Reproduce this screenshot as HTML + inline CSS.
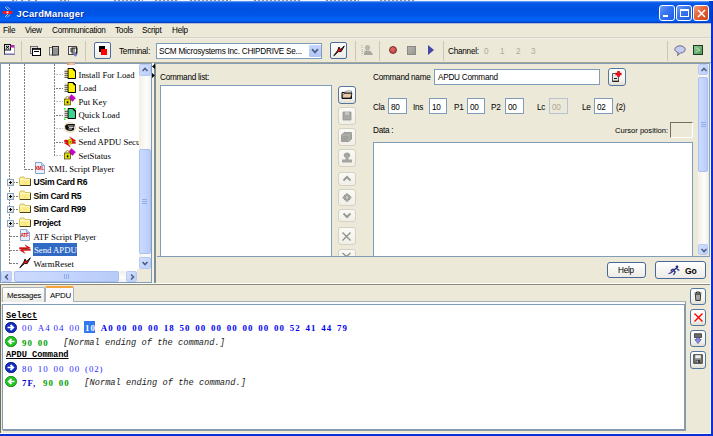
<!DOCTYPE html>
<html><head><meta charset="utf-8">
<style>
*{margin:0;padding:0;box-sizing:border-box}
html,body{width:713px;height:436px;overflow:hidden;background:#ECE9D8;font-family:"Liberation Sans",sans-serif;font-size:8.2px;letter-spacing:-0.25px;color:#000}
.a{position:absolute}
.t{position:absolute;white-space:pre;line-height:1}
.sep{position:absolute;width:1px;background:#CBC7B4}
.edit{position:absolute;background:#fff;border:1px solid #7F9DB9}
.tb{position:absolute;border:1px solid #C9C7BA;border-radius:2px;background:#F4F3EE}
.tbh{position:absolute;border:1px solid #4C6C9C;border-radius:2px;background:linear-gradient(#FFFFFF,#ECEBE6)}
.dv{position:absolute;width:1px;background-image:linear-gradient(#808080 66%,transparent 66%);background-size:1px 3px}
.dh{position:absolute;height:1px;background-image:linear-gradient(90deg,#808080 66%,transparent 66%);background-size:3px 1px}
.sbtn{border:1px solid #B6C9F5;border-radius:2px;background:linear-gradient(135deg,#D3E0FD,#BCCFFA)}
.sthumb{border:1px solid #A9C0F5;border-radius:2px;background:linear-gradient(90deg,#CCDAFC,#C3D4FC 50%,#B8CBF8)}
.serif{font-family:"Liberation Serif",serif;font-size:8.7px;letter-spacing:0}
.mono{font-family:"Liberation Mono",monospace;font-size:8.7px;font-weight:bold;letter-spacing:0}
</style></head><body>

<!-- title bar -->
<div class="a" style="left:0;top:0;width:713px;height:1px;background:#F4F6FA"></div>
<div class="a" style="left:12px;top:0;width:5px;height:1px;background:repeating-linear-gradient(90deg,#8A8FA8 0 2px,#E8ECF4 2px 4px)"></div><div class="a" style="left:21px;top:0;width:4px;height:1px;background:repeating-linear-gradient(90deg,#8A8FA8 0 2px,#E8ECF4 2px 4px)"></div><div class="a" style="left:28px;top:0;width:4px;height:1px;background:repeating-linear-gradient(90deg,#8A8FA8 0 2px,#E8ECF4 2px 4px)"></div><div class="a" style="left:35px;top:0;width:3px;height:1px;background:repeating-linear-gradient(90deg,#8A8FA8 0 2px,#E8ECF4 2px 4px)"></div><div class="a" style="left:60px;top:0;width:9px;height:1px;background:repeating-linear-gradient(90deg,#8A8FA8 0 2px,#E8ECF4 2px 4px)"></div><div class="a" style="left:114px;top:0;width:29px;height:1px;background:repeating-linear-gradient(90deg,#8A8FA8 0 2px,#E8ECF4 2px 4px)"></div><div class="a" style="left:155px;top:0;width:24px;height:1px;background:repeating-linear-gradient(90deg,#8A8FA8 0 2px,#E8ECF4 2px 4px)"></div><div class="a" style="left:190px;top:0;width:41px;height:1px;background:repeating-linear-gradient(90deg,#8A8FA8 0 2px,#E8ECF4 2px 4px)"></div><div class="a" style="left:254px;top:0;width:47px;height:1px;background:repeating-linear-gradient(90deg,#8A8FA8 0 2px,#E8ECF4 2px 4px)"></div><div class="a" style="left:326px;top:0;width:33px;height:1px;background:repeating-linear-gradient(90deg,#8A8FA8 0 2px,#E8ECF4 2px 4px)"></div><div class="a" style="left:380px;top:0;width:34px;height:1px;background:repeating-linear-gradient(90deg,#8A8FA8 0 2px,#E8ECF4 2px 4px)"></div>
<div class="a" style="left:0;top:1px;width:713px;height:23px;background:linear-gradient(#7EB0F8 0px,#2A78F0 1px,#0858E8 2px,#0052E2 8px,#0054E6 13px,#0062F6 18px,#0060F4 20px,#0046D0 21px,#003CC0 22px,#9AAAD0 22px,#C8CCD8 23px)"></div>
<div class="a" style="left:709px;top:1px;width:4px;height:22px;background:linear-gradient(90deg,#0050E0,#0030C8)"></div>
<div class="t" style="left:16.5px;top:9px;font-weight:bold;font-size:9.4px;letter-spacing:0.2px;color:#fff;text-shadow:1px 1px 0 #0A2A9C">JCardManager</div>

<!-- menu -->
<div class="t" style="left:3px;top:27px">File</div>
<div class="t" style="left:25px;top:27px">View</div>
<div class="t" style="left:52px;top:27px">Communication</div>
<div class="t" style="left:115px;top:27px">Tools</div>
<div class="t" style="left:142px;top:27px">Script</div>
<div class="t" style="left:172px;top:27px">Help</div>
<div class="a" style="left:0;top:37px;width:711px;height:1px;background:#D6D2C2"></div>
<div class="a" style="left:0;top:38px;width:711px;height:1px;background:#F2F0E8"></div>

<!-- toolbar -->

<div class="sep" style="left:21px;top:41px;height:20px"></div>
<div class="sep" style="left:85px;top:41px;height:20px"></div>
<div class="sep" style="left:355px;top:41px;height:20px"></div>
<div class="sep" style="left:379px;top:41px;height:20px"></div>
<div class="sep" style="left:443px;top:41px;height:20px"></div>
<div class="sep" style="left:667px;top:41px;height:20px"></div>
<div class="tbh" style="left:94px;top:42px;width:17px;height:17px"></div>
<div class="a" style="left:99px;top:46px;width:6px;height:6px;background:#000"></div>
<div class="a" style="left:101px;top:49px;width:6px;height:6px;background:#F00"></div>
<div class="t" style="left:119px;top:48px">Terminal:</div>
<div class="edit" style="left:156px;top:43px;width:166px;height:16px"></div>
<div class="t" style="left:159px;top:48px">SCM Microsystems Inc. CHIPDRIVE Se...</div>
<div class="a" style="left:309px;top:45px;width:12px;height:12px;background:linear-gradient(#C6D6FC,#B0C6F8);border-radius:1px"></div>
<div class="tbh" style="left:330px;top:42px;width:17px;height:17px"></div>
<div class="t" style="left:448px;top:48px">Channel:</div>
<div class="t" style="left:484px;top:48px;color:#ACA899">0</div>
<div class="t" style="left:500px;top:48px;color:#ACA899">1</div>
<div class="t" style="left:516px;top:48px;color:#ACA899">2</div>
<div class="t" style="left:531px;top:48px;color:#ACA899">3</div>
<div class="a" style="left:389px;top:46px;width:8px;height:8px;border-radius:50%;background:radial-gradient(circle at 40% 35%,#E06A64,#B83A36);border:1px solid #7A2A28"></div>
<div class="a" style="left:407px;top:46px;width:9px;height:9px;background:linear-gradient(135deg,#B4B4B0,#98988F);border:1px solid #8A8A84"></div>
<div class="a" style="left:428px;top:45px;width:0;height:0;border-top:5px solid transparent;border-bottom:5px solid transparent;border-left:6px solid #4848A8"></div>

<!-- tree panel -->
<div class="a" style="left:0;top:63px;width:152px;height:220px;border:1px solid #7F9DB9;background:#fff"></div>
<div class="dv" style="left:9px;top:64px;height:200px"></div>
<div class="dv" style="left:24px;top:64px;height:106px"></div>
<div class="dv" style="left:54px;top:64px;height:92px"></div>
<div class="a" style="left:56px;top:74px;width:7px;height:1px;background-image:linear-gradient(90deg,#C4C4C4 66%,transparent 66%);background-size:3px 1px"></div>
<div class="t serif" style="left:78.5px;top:70.7px">Install For Load</div>
<div class="a" style="left:56px;top:88px;width:7px;height:1px;background-image:linear-gradient(90deg,#7C7C7C 66%,transparent 66%);background-size:3px 1px"></div>
<div class="t serif" style="left:78.5px;top:84.2px">Load</div>
<div class="a" style="left:56px;top:101px;width:7px;height:1px;background-image:linear-gradient(90deg,#C4C4C4 66%,transparent 66%);background-size:3px 1px"></div>
<div class="t serif" style="left:78.5px;top:97.7px">Put Key</div>
<div class="a" style="left:56px;top:115px;width:7px;height:1px;background-image:linear-gradient(90deg,#7C7C7C 66%,transparent 66%);background-size:3px 1px"></div>
<div class="t serif" style="left:78.5px;top:111.2px">Quick Load</div>
<div class="a" style="left:56px;top:128px;width:7px;height:1px;background-image:linear-gradient(90deg,#C4C4C4 66%,transparent 66%);background-size:3px 1px"></div>
<div class="t serif" style="left:78.5px;top:124.7px">Select</div>
<div class="a" style="left:56px;top:142px;width:7px;height:1px;background-image:linear-gradient(90deg,#7C7C7C 66%,transparent 66%);background-size:3px 1px"></div>
<div class="t serif" style="left:78.5px;top:138.2px">Send APDU Secure</div>
<div class="a" style="left:56px;top:155px;width:7px;height:1px;background-image:linear-gradient(90deg,#C4C4C4 66%,transparent 66%);background-size:3px 1px"></div>
<div class="t serif" style="left:78.5px;top:151.7px">SetStatus</div>
<div class="a" style="left:25px;top:169px;width:8px;height:1px;background-image:linear-gradient(90deg,#7C7C7C 66%,transparent 66%);background-size:3px 1px"></div>
<div class="t serif" style="left:48px;top:165.2px">XML Script Player</div>
<div class="a" style="left:10px;top:182px;width:9px;height:1px;background-image:linear-gradient(90deg,#7C7C7C 66%,transparent 66%);background-size:3px 1px"></div>
<div class="t" style="left:33.5px;top:178.3px;font-weight:bold;font-size:8.6px;letter-spacing:-0.3px">USim Card R6</div>
<div class="a" style="left:10px;top:196px;width:9px;height:1px;background-image:linear-gradient(90deg,#7C7C7C 66%,transparent 66%);background-size:3px 1px"></div>
<div class="t" style="left:33.5px;top:191.8px;font-weight:bold;font-size:8.6px;letter-spacing:-0.3px">Sim Card R5</div>
<div class="a" style="left:10px;top:209px;width:9px;height:1px;background-image:linear-gradient(90deg,#7C7C7C 66%,transparent 66%);background-size:3px 1px"></div>
<div class="t" style="left:33.5px;top:205.3px;font-weight:bold;font-size:8.6px;letter-spacing:-0.3px">Sim Card R99</div>
<div class="a" style="left:10px;top:223px;width:9px;height:1px;background-image:linear-gradient(90deg,#7C7C7C 66%,transparent 66%);background-size:3px 1px"></div>
<div class="t" style="left:33.5px;top:218.8px;font-weight:bold;font-size:8.6px;letter-spacing:-0.3px">Project</div>
<div class="a" style="left:10px;top:236px;width:9px;height:1px;background-image:linear-gradient(90deg,#7C7C7C 66%,transparent 66%);background-size:3px 1px"></div>
<div class="t serif" style="left:33.5px;top:232.7px">ATF Script Player</div>
<div class="a" style="left:10px;top:250px;width:9px;height:1px;background-image:linear-gradient(90deg,#7C7C7C 66%,transparent 66%);background-size:3px 1px"></div>
<div class="a" style="left:33px;top:243px;width:44px;height:13px;background:#316AC5"></div>
<div class="t serif" style="left:34.0px;top:246.2px;color:#fff">Send APDU</div>
<div class="a" style="left:10px;top:263px;width:9px;height:1px;background-image:linear-gradient(90deg,#7C7C7C 66%,transparent 66%);background-size:3px 1px"></div>
<div class="t serif" style="left:33.5px;top:259.7px">WarmReset</div>

<div class="a" style="left:67px;top:63px;width:8px;height:2px;background:linear-gradient(90deg,#F08080,#F4D090,#E0A0E0)"></div>
<svg class="a" style="left:64px;top:68px" width="12" height="11" viewBox="0 0 12 11"><path d="M4 0.5H9.5L11.5 2.5V10.5H4Z" fill="#FFF200" stroke="#000" stroke-width="1"/><path d="M9 1L11 3" stroke="#000" stroke-width="1.2"/><path d="M0.5 2H4" stroke="#E9D9B0" stroke-width="1"/><path d="M0.5 3.3H4M0.5 5.3H4M0.5 7.3H4M0.5 9.3H4" stroke="#222" stroke-width="0.9"/><path d="M0.8 4.3H3.5M0.8 6.3H3.5M0.8 8.3H3.5" stroke="#D8C8A0" stroke-width="0.8"/></svg>
<svg class="a" style="left:64px;top:82px" width="12" height="11" viewBox="0 0 12 11"><path d="M4 0.5H9.5L11.5 2.5V10.5H4Z" fill="#FFF200" stroke="#000" stroke-width="1"/><path d="M9 1L11 3" stroke="#000" stroke-width="1.2"/><path d="M0.5 2H4" stroke="#E9D9B0" stroke-width="1"/><path d="M0.5 3.3H4M0.5 5.3H4M0.5 7.3H4M0.5 9.3H4" stroke="#222" stroke-width="0.9"/><path d="M0.8 4.3H3.5M0.8 6.3H3.5M0.8 8.3H3.5" stroke="#D8C8A0" stroke-width="0.8"/></svg>
<svg class="a" style="left:64px;top:94px" width="12" height="12" viewBox="0 0 12 12"><path d="M7.5 0.5L11.5 4L8.5 7.5L4.5 4Z" fill="#CC00CC" stroke="#8A008A" stroke-width="0.4"/><rect x="0.5" y="5" width="6" height="6" fill="#E8E000" stroke="#202000" stroke-width="0.6"/><path d="M1.8 5V3.5Q3.5 1.5 5.2 3.5V5" fill="none" stroke="#9A9400" stroke-width="1"/><rect x="2.8" y="7.3" width="1.6" height="2" fill="#000"/></svg>
<svg class="a" style="left:64px;top:108px" width="12" height="12" viewBox="0 0 12 12"><path d="M4 0.5H9.5L11.5 2.5V10.5H4Z" fill="#3FD18F" stroke="#000" stroke-width="1"/><path d="M9 1L11 3" stroke="#000" stroke-width="1.2"/><path d="M0.5 2H4" stroke="#E9D9B0" stroke-width="1"/><path d="M0.5 3.3H4M0.5 5.3H4M0.5 7.3H4M0.5 9.3H4" stroke="#222" stroke-width="0.9"/><path d="M0.8 4.3H3.5M0.8 6.3H3.5M0.8 8.3H3.5" stroke="#D8C8A0" stroke-width="0.8"/><rect x="0" y="0" width="1.5" height="1.5" fill="#0F0"/><rect x="10.5" y="0" width="1.5" height="1.5" fill="#0F0"/><rect x="0" y="10.5" width="1.5" height="1.5" fill="#0F0"/></svg>
<svg class="a" style="left:64px;top:122px" width="12" height="11" viewBox="0 0 12 11"><ellipse cx="6" cy="5.5" rx="5.8" ry="5" fill="#F2E6CC" stroke="#D8C8A0" stroke-width="0.5"/><path d="M1 4Q2 1.5 6 2H11L10 5.5Q11 8.5 7 9Q3 9 1.5 7Z" fill="#111"/><path d="M4 4H9.5M5 5.5H9.5M4.5 7H8" stroke="#fff" stroke-width="0.8"/></svg>
<svg class="a" style="left:64px;top:136px" width="12" height="12" viewBox="0 0 12 12"><path d="M0.5 4H8L5.5 0.8L11.8 4.6L8 6H0.5Z" fill="#F00" stroke="#A00" stroke-width="0.3"/><path d="M11.5 7.5H4L6.5 11L0.2 7L4 5.8H11.5Z" fill="#F00" stroke="#A00" stroke-width="0.3"/><path d="M1 5.9H11" stroke="#555" stroke-width="0.5"/><rect x="4.3" y="3.5" width="3.6" height="4.6" rx="0.8" fill="#F0E800" stroke="#8A8400" stroke-width="0.6"/><rect x="5.7" y="5.2" width="0.9" height="1.4" fill="#222"/></svg>
<svg class="a" style="left:64px;top:148px" width="12" height="12" viewBox="0 0 12 12"><path d="M7.5 0.5L11.5 4L8.5 7.5L4.5 4Z" fill="#CC00CC" stroke="#8A008A" stroke-width="0.4"/><rect x="0.5" y="5" width="6" height="6" fill="#E8E000" stroke="#202000" stroke-width="0.6"/><path d="M1.8 5V3.5Q3.5 1.5 5.2 3.5V5" fill="none" stroke="#9A9400" stroke-width="1"/><rect x="2.8" y="7.3" width="1.6" height="2" fill="#000"/></svg>
<svg class="a" style="left:34px;top:162px" width="11" height="12" viewBox="0 0 11 12"><path d="M1.5 0.5H7.5L10.5 3.5V11.5H1.5Z" fill="#E8F0FC" stroke="#7C98C8" stroke-width="0.9"/><path d="M7.5 0.5V3.5H10.5" fill="#C0D4F0" stroke="#7C98C8" stroke-width="0.7"/><text x="5.5" y="7.8" font-family="Liberation Sans" font-size="4.6" font-weight="bold" fill="#E01010" text-anchor="middle" letter-spacing="-0.3">XML</text></svg>
<div class="a" style="left:7px;top:179px;width:7px;height:7px;border:1px solid #8AA4C6;background:linear-gradient(135deg,#fff,#D6D0C0)"></div>
<div class="a" style="left:9px;top:182px;width:3px;height:1px;background:#000"></div>
<div class="a" style="left:10px;top:181px;width:1px;height:3px;background:#000"></div>
<svg class="a" style="left:19px;top:176px" width="12" height="10" viewBox="0 0 12 10"><path d="M0.5 2.5V9.5H11.5V2.5H6L5 1H1.5Z" fill="#FCEE8C" stroke="#C8B050" stroke-width="0.8"/><path d="M1.2 3.4H10.8" stroke="#FFFCE0" stroke-width="0.8"/><path d="M4 5L8 8.5M8 5L4 8.5" stroke="#F4D880" stroke-width="0.6"/><path d="M1 9.6H11.6V3" stroke="#2A2410" stroke-width="0.9" fill="none"/></svg>
<div class="a" style="left:7px;top:193px;width:7px;height:7px;border:1px solid #8AA4C6;background:linear-gradient(135deg,#fff,#D6D0C0)"></div>
<div class="a" style="left:9px;top:196px;width:3px;height:1px;background:#000"></div>
<div class="a" style="left:10px;top:195px;width:1px;height:3px;background:#000"></div>
<svg class="a" style="left:19px;top:190px" width="12" height="10" viewBox="0 0 12 10"><path d="M0.5 2.5V9.5H11.5V2.5H6L5 1H1.5Z" fill="#FCEE8C" stroke="#C8B050" stroke-width="0.8"/><path d="M1.2 3.4H10.8" stroke="#FFFCE0" stroke-width="0.8"/><path d="M4 5L8 8.5M8 5L4 8.5" stroke="#F4D880" stroke-width="0.6"/><path d="M1 9.6H11.6V3" stroke="#2A2410" stroke-width="0.9" fill="none"/></svg>
<div class="a" style="left:7px;top:206px;width:7px;height:7px;border:1px solid #8AA4C6;background:linear-gradient(135deg,#fff,#D6D0C0)"></div>
<div class="a" style="left:9px;top:209px;width:3px;height:1px;background:#000"></div>
<div class="a" style="left:10px;top:208px;width:1px;height:3px;background:#000"></div>
<svg class="a" style="left:19px;top:203px" width="12" height="10" viewBox="0 0 12 10"><path d="M0.5 2.5V9.5H11.5V2.5H6L5 1H1.5Z" fill="#FCEE8C" stroke="#C8B050" stroke-width="0.8"/><path d="M1.2 3.4H10.8" stroke="#FFFCE0" stroke-width="0.8"/><path d="M4 5L8 8.5M8 5L4 8.5" stroke="#F4D880" stroke-width="0.6"/><path d="M1 9.6H11.6V3" stroke="#2A2410" stroke-width="0.9" fill="none"/></svg>
<div class="a" style="left:7px;top:220px;width:7px;height:7px;border:1px solid #8AA4C6;background:linear-gradient(135deg,#fff,#D6D0C0)"></div>
<div class="a" style="left:9px;top:223px;width:3px;height:1px;background:#000"></div>
<div class="a" style="left:10px;top:222px;width:1px;height:3px;background:#000"></div>
<svg class="a" style="left:19px;top:217px" width="12" height="10" viewBox="0 0 12 10"><path d="M0.5 2.5V9.5H11.5V2.5H6L5 1H1.5Z" fill="#FCEE8C" stroke="#C8B050" stroke-width="0.8"/><path d="M1.2 3.4H10.8" stroke="#FFFCE0" stroke-width="0.8"/><path d="M4 5L8 8.5M8 5L4 8.5" stroke="#F4D880" stroke-width="0.6"/><path d="M1 9.6H11.6V3" stroke="#2A2410" stroke-width="0.9" fill="none"/></svg>
<svg class="a" style="left:19px;top:229px" width="11" height="12" viewBox="0 0 11 12"><path d="M1.5 0.5H7.5L10.5 3.5V11.5H1.5Z" fill="#E8F0FC" stroke="#7C98C8" stroke-width="0.9"/><path d="M7.5 0.5V3.5H10.5" fill="#C0D4F0" stroke="#7C98C8" stroke-width="0.7"/><text x="5.6" y="7.6" font-family="Liberation Sans" font-size="4.8" font-weight="bold" fill="#E01010" text-anchor="middle" letter-spacing="-0.2">ATF</text></svg>
<svg class="a" style="left:19px;top:244px" width="12" height="11" viewBox="0 0 12 11"><path d="M0.5 3.5H8L6 0.8L11.5 4L8 5H0.5Z" fill="#F00" stroke="#900" stroke-width="0.3"/><path d="M11.5 6.5H4L6 9.5L0.5 6L4 5.2H11.5Z" fill="#F00" stroke="#900" stroke-width="0.3"/><path d="M2 5.2H11" stroke="#444" stroke-width="0.6"/></svg>
<svg class="a" style="left:19px;top:257px" width="12" height="12" viewBox="0 0 12 12"><path d="M0.8 10.8L4.8 5.2L6 2L7.6 4.6L11.3 0.8L8.2 6.6L5.4 6.6Z" fill="#F01010" stroke="#000" stroke-width="0.9" stroke-linejoin="round"/></svg>

<div class="a" style="left:139px;top:64px;width:12px;height:205px;background:linear-gradient(90deg,#F1EFE6,#FDFDFA 60%,#F3F1EA)"></div>
<div class="a sbtn" style="left:139px;top:64px;width:12px;height:12px"></div>
<div class="a" style="left:142px;top:67px;width:6px;height:5px"><svg width="6" height="5" style="display:block;overflow:visible"><path d="M0.5 4L3 1.5L5.5 4" stroke="#4D6185" stroke-width="1.6" fill="none"/></svg></div>
<div class="a sthumb" style="left:139px;top:149px;width:12px;height:105px"></div>
<div class="a" style="left:142px;top:199px;width:5px;height:1px;background:#E6EEFC;border-bottom:1px solid #8FAEEB"></div>
<div class="a" style="left:142px;top:201px;width:5px;height:1px;background:#E6EEFC;border-bottom:1px solid #8FAEEB"></div>
<div class="a" style="left:142px;top:203px;width:5px;height:1px;background:#E6EEFC;border-bottom:1px solid #8FAEEB"></div>
<div class="a sbtn" style="left:139px;top:257px;width:12px;height:12px"></div>
<div class="a" style="left:142px;top:261px;width:6px;height:5px"><svg width="6" height="5" style="display:block;overflow:visible"><path d="M0.5 1L3 3.5L5.5 1" stroke="#4D6185" stroke-width="1.6" fill="none"/></svg></div>
<div class="a" style="left:1px;top:271px;width:136px;height:11px;background:linear-gradient(#F1EFE6,#FDFDFA 60%,#F3F1EA)"></div>
<div class="a sbtn" style="left:1px;top:271px;width:11px;height:11px"></div>
<div class="a" style="left:4px;top:274px;width:5px;height:6px"><svg width="5" height="6" style="display:block;overflow:visible"><path d="M4 0.5L1.5 3L4 5.5" stroke="#4D6185" stroke-width="1.6" fill="none"/></svg></div>
<div class="a sthumb" style="left:14px;top:271px;width:105px;height:11px"></div>
<div class="a" style="left:64px;top:274px;width:1px;height:5px;background:#E6EEFC;border-right:1px solid #8FAEEB"></div>
<div class="a" style="left:66px;top:274px;width:1px;height:5px;background:#E6EEFC;border-right:1px solid #8FAEEB"></div>
<div class="a" style="left:68px;top:274px;width:1px;height:5px;background:#E6EEFC;border-right:1px solid #8FAEEB"></div>
<div class="a sbtn" style="left:126px;top:271px;width:11px;height:11px"></div>
<div class="a" style="left:130px;top:274px;width:5px;height:6px"><svg width="5" height="6" style="display:block;overflow:visible"><path d="M1 0.5L3.5 3L1 5.5" stroke="#4D6185" stroke-width="1.6" fill="none"/></svg></div>
<div class="a" style="left:137px;top:269px;width:14px;height:13px;background:#ECE9D8"></div>
<div class="a" style="left:698px;top:64px;width:10px;height:191px;background:linear-gradient(90deg,#F1EFE6,#FDFDFA 60%,#F3F1EA)"></div>
<div class="a sbtn" style="left:698px;top:64px;width:10px;height:11px"></div>
<div class="a" style="left:701px;top:67px;width:6px;height:5px"><svg width="6" height="5" style="display:block;overflow:visible"><path d="M0.5 4L3 1.5L5.5 4" stroke="#4D6185" stroke-width="1.6" fill="none"/></svg></div>
<div class="a sthumb" style="left:698px;top:77px;width:10px;height:95px"></div>
<div class="a" style="left:701px;top:122px;width:5px;height:1px;background:#E6EEFC;border-bottom:1px solid #8FAEEB"></div>
<div class="a" style="left:701px;top:124px;width:5px;height:1px;background:#E6EEFC;border-bottom:1px solid #8FAEEB"></div>
<div class="a" style="left:701px;top:126px;width:5px;height:1px;background:#E6EEFC;border-bottom:1px solid #8FAEEB"></div>
<div class="a sbtn" style="left:698px;top:244px;width:10px;height:11px"></div>
<div class="a" style="left:701px;top:248px;width:6px;height:5px"><svg width="6" height="5" style="display:block;overflow:visible"><path d="M0.5 1L3 3.5L5.5 1" stroke="#4D6185" stroke-width="1.6" fill="none"/></svg></div>

<div class="a" style="left:709px;top:63px;width:1px;height:194px;background:#8FA3BC"></div>

<!-- right panel -->
<div class="a" style="left:155px;top:63px;width:555px;height:220px;border-top:1px solid #7F9DB9;border-left:1px solid #7090A8"></div>
<div class="a" style="left:154px;top:62px;width:1px;height:222px;background:#8A8878"></div>
<div class="a" style="left:152px;top:62px;width:2px;height:221px;background:#F6F4EA"></div>
<div class="a" style="left:0;top:62px;width:711px;height:1px;background:#A8A690"></div>
<div class="a" style="left:0;top:283px;width:711px;height:1px;background:#FFFFFF"></div>
<div class="a" style="left:0;top:284px;width:711px;height:1px;background:#8C8A7C"></div>
<div class="t" style="left:160px;top:74px">Command list:</div>
<div class="edit" style="left:160px;top:85px;width:172px;height:172px"></div>
<div class="t" style="left:373px;top:74px">Command name</div>
<div class="edit" style="left:434px;top:69px;width:166px;height:16px"></div>
<div class="t" style="left:438px;top:74px">APDU Command</div>
<div class="t" style="left:373px;top:104px">Cla</div>
<div class="edit" style="left:388px;top:98px;width:19px;height:16px"></div>
<div class="t" style="left:391px;top:104px">80</div>
<div class="t" style="left:413px;top:104px">Ins</div>
<div class="edit" style="left:429px;top:98px;width:18px;height:16px"></div>
<div class="t" style="left:432px;top:104px">10</div>
<div class="t" style="left:454px;top:104px">P1</div>
<div class="edit" style="left:467px;top:98px;width:18px;height:16px"></div>
<div class="t" style="left:470px;top:104px">00</div>
<div class="t" style="left:491px;top:104px">P2</div>
<div class="edit" style="left:505px;top:98px;width:19px;height:16px"></div>
<div class="t" style="left:508px;top:104px">00</div>
<div class="t" style="left:537px;top:104px">Lc</div>
<div class="edit" style="left:549px;top:98px;width:19px;height:16px;background:#ECE9D8;border-color:#B5C3D3"></div>
<div class="t" style="left:552px;top:104px;color:#ACA899">00</div>
<div class="t" style="left:582px;top:104px">Le</div>
<div class="edit" style="left:594px;top:98px;width:19px;height:16px"></div>
<div class="t" style="left:597px;top:104px">02</div>
<div class="t" style="left:616px;top:104px">(2)</div>
<div class="t" style="left:373px;top:127px">Data :</div>
<div class="t" style="left:615px;top:127px;font-size:7.6px;letter-spacing:0">Cursor position:</div>
<div class="a" style="left:670px;top:122px;width:23px;height:16px;border-top:1px solid #716F64;border-left:1px solid #716F64;border-bottom:1px solid #fff;border-right:1px solid #fff"></div>
<div class="edit" style="left:373px;top:142px;width:320px;height:115px"></div>
<div class="a" style="left:157px;top:256px;width:552px;height:1px;background:#7F9DB9"></div>

<!-- help / go -->
<div class="a" style="left:607px;top:262px;width:39px;height:16px;border:1px solid #46699A;border-radius:3px;background:linear-gradient(#FFFFFF,#ECEBE6)"></div>
<div class="t" style="left:618px;top:267px">Help</div>
<div class="a" style="left:655px;top:261px;width:51px;height:18px;border:1px solid #46699A;border-radius:3px;background:linear-gradient(#FFFFFF,#ECEBE6)"></div>
<div class="t" style="left:685px;top:267px;font-weight:bold;font-size:8.6px">Go</div>

<!-- tabs & log -->
<div class="a" style="left:0;top:285px;width:1px;height:148px;background:#716F64"></div>
<div class="a" style="left:2px;top:287px;width:43px;height:15px;border:1px solid #A9B1B6;border-bottom:none;border-radius:2px 2px 0 0;background:linear-gradient(#FFFFFF,#ECEBE5)"></div>
<div class="t" style="left:7px;top:292px;font-size:7.9px">Messages</div>
<div class="a" style="left:45px;top:286px;width:29px;height:17px;border:1px solid #A9B1B6;border-bottom:none;border-top:2px solid #F5A43C;background:#FCFCFE;border-radius:2px 2px 0 0"></div>
<div class="t" style="left:50px;top:292px;font-size:7.9px">APDU</div>
<div class="a" style="left:1px;top:302px;width:685px;height:2px;background:#FCFCFE"></div>
<div class="a" style="left:2px;top:304px;width:683px;height:126px;background:#fff;border:1px solid #7F9DB9"></div>
<div class="a" style="left:74px;top:301px;width:612px;height:1px;background:#A8B0B8"></div>
<div class="a" style="left:3px;top:430px;width:683px;height:1px;background:#9098A0"></div>
<div class="a" style="left:685px;top:302px;width:1px;height:129px;background:#9098A0"></div>
<div class="a" style="left:0;top:433px;width:711px;height:1px;background:#F8F8F4"></div>
<div class="a" style="left:710px;top:63px;width:1px;height:371px;background:#F8F8F4"></div>
<div class="t mono" style="left:6px;top:311.5px;text-decoration:underline">Select</div>
<svg class="a" style="left:5px;top:322px" width="12" height="11" viewBox="0 0 12 11"><ellipse cx="6" cy="5.5" rx="5.6" ry="5.2" fill="#1030C8" stroke="#000A70" stroke-width="0.8"/><path d="M2.5 5.5H7.5M5.5 3L8.3 5.5L5.5 8" stroke="#fff" stroke-width="1.7" fill="none"/></svg>
<div class="t" style="left:22.099999999999998px;top:324px;font-family:'Liberation Serif',serif;font-weight:bold;font-size:8.9px;letter-spacing:0.9px;color:#2A2AFF;font-weight:normal">00</div>
<div class="t" style="left:37.85px;top:324px;font-family:'Liberation Serif',serif;font-weight:bold;font-size:8.9px;letter-spacing:0.9px;color:#2A2AFF;font-weight:normal">A4</div>
<div class="t" style="left:53.6px;top:324px;font-family:'Liberation Serif',serif;font-weight:bold;font-size:8.9px;letter-spacing:0.9px;color:#2A2AFF;font-weight:normal">04</div>
<div class="t" style="left:69.35000000000001px;top:324px;font-family:'Liberation Serif',serif;font-weight:bold;font-size:8.9px;letter-spacing:0.9px;color:#2A2AFF;font-weight:normal">00</div>
<div class="a" style="left:83.9px;top:321px;width:11px;height:12px;background:#3478F0"></div>
<div class="t" style="left:85.10000000000001px;top:324px;font-family:'Liberation Serif',serif;font-weight:bold;font-size:8.9px;letter-spacing:0.9px;color:#fff">10</div>
<div class="t" style="left:100.85000000000001px;top:324px;font-family:'Liberation Serif',serif;font-weight:bold;font-size:8.9px;letter-spacing:0.9px;color:#0000F0">A0</div>
<div class="t" style="left:116.60000000000001px;top:324px;font-family:'Liberation Serif',serif;font-weight:bold;font-size:8.9px;letter-spacing:0.9px;color:#0000F0">00</div>
<div class="t" style="left:132.35px;top:324px;font-family:'Liberation Serif',serif;font-weight:bold;font-size:8.9px;letter-spacing:0.9px;color:#0000F0">00</div>
<div class="t" style="left:148.1px;top:324px;font-family:'Liberation Serif',serif;font-weight:bold;font-size:8.9px;letter-spacing:0.9px;color:#0000F0">00</div>
<div class="t" style="left:163.85px;top:324px;font-family:'Liberation Serif',serif;font-weight:bold;font-size:8.9px;letter-spacing:0.9px;color:#0000F0">18</div>
<div class="t" style="left:179.6px;top:324px;font-family:'Liberation Serif',serif;font-weight:bold;font-size:8.9px;letter-spacing:0.9px;color:#0000F0">50</div>
<div class="t" style="left:195.35px;top:324px;font-family:'Liberation Serif',serif;font-weight:bold;font-size:8.9px;letter-spacing:0.9px;color:#0000F0">00</div>
<div class="t" style="left:211.1px;top:324px;font-family:'Liberation Serif',serif;font-weight:bold;font-size:8.9px;letter-spacing:0.9px;color:#0000F0">00</div>
<div class="t" style="left:226.85px;top:324px;font-family:'Liberation Serif',serif;font-weight:bold;font-size:8.9px;letter-spacing:0.9px;color:#0000F0">00</div>
<div class="t" style="left:242.6px;top:324px;font-family:'Liberation Serif',serif;font-weight:bold;font-size:8.9px;letter-spacing:0.9px;color:#0000F0">00</div>
<div class="t" style="left:258.34999999999997px;top:324px;font-family:'Liberation Serif',serif;font-weight:bold;font-size:8.9px;letter-spacing:0.9px;color:#0000F0">00</div>
<div class="t" style="left:274.09999999999997px;top:324px;font-family:'Liberation Serif',serif;font-weight:bold;font-size:8.9px;letter-spacing:0.9px;color:#0000F0">00</div>
<div class="t" style="left:289.84999999999997px;top:324px;font-family:'Liberation Serif',serif;font-weight:bold;font-size:8.9px;letter-spacing:0.9px;color:#0000F0">52</div>
<div class="t" style="left:305.59999999999997px;top:324px;font-family:'Liberation Serif',serif;font-weight:bold;font-size:8.9px;letter-spacing:0.9px;color:#0000F0">41</div>
<div class="t" style="left:321.34999999999997px;top:324px;font-family:'Liberation Serif',serif;font-weight:bold;font-size:8.9px;letter-spacing:0.9px;color:#0000F0">44</div>
<div class="t" style="left:337.09999999999997px;top:324px;font-family:'Liberation Serif',serif;font-weight:bold;font-size:8.9px;letter-spacing:0.9px;color:#0000F0">79</div>
<svg class="a" style="left:5px;top:336px" width="12" height="11" viewBox="0 0 12 11"><ellipse cx="6" cy="5.5" rx="5.6" ry="5.2" fill="#22C422" stroke="#108010" stroke-width="0.8"/><path d="M9.5 5.5H4.5M6.5 3L3.7 5.5L6.5 8" stroke="#fff" stroke-width="1.7" fill="none"/></svg>
<div class="t" style="left:22.099999999999998px;top:338.5px;font-family:'Liberation Serif',serif;font-weight:bold;font-size:8.9px;letter-spacing:0.9px;color:#00A000">90</div>
<div class="t" style="left:37.85px;top:338.5px;font-family:'Liberation Serif',serif;font-weight:bold;font-size:8.9px;letter-spacing:0.9px;color:#00A000">00</div>
<div class="t" style="left:63.3px;top:338.5px;font-family:'Liberation Mono',monospace;font-size:8.7px;font-style:italic;color:#1A1A1A;letter-spacing:0">[Normal ending of the command.]</div>
<div class="t mono" style="left:6px;top:351px;text-decoration:underline">APDU Command</div>
<svg class="a" style="left:5px;top:362px" width="12" height="11" viewBox="0 0 12 11"><ellipse cx="6" cy="5.5" rx="5.6" ry="5.2" fill="#1030C8" stroke="#000A70" stroke-width="0.8"/><path d="M2.5 5.5H7.5M5.5 3L8.3 5.5L5.5 8" stroke="#fff" stroke-width="1.7" fill="none"/></svg>
<div class="t" style="left:22.099999999999998px;top:365px;font-family:'Liberation Serif',serif;font-weight:bold;font-size:8.9px;letter-spacing:0.9px;color:#2A2AFF;font-weight:normal">80</div>
<div class="t" style="left:37.85px;top:365px;font-family:'Liberation Serif',serif;font-weight:bold;font-size:8.9px;letter-spacing:0.9px;color:#2A2AFF;font-weight:normal">10</div>
<div class="t" style="left:53.6px;top:365px;font-family:'Liberation Serif',serif;font-weight:bold;font-size:8.9px;letter-spacing:0.9px;color:#2A2AFF;font-weight:normal">00</div>
<div class="t" style="left:69.35000000000001px;top:365px;font-family:'Liberation Serif',serif;font-weight:bold;font-size:8.9px;letter-spacing:0.9px;color:#2A2AFF;font-weight:normal">00</div>
<div class="t" style="left:85.10000000000001px;top:365px;font-family:'Liberation Serif',serif;font-weight:bold;font-size:8.9px;letter-spacing:0.9px;color:#2A2AFF;font-weight:normal">(02)</div>
<svg class="a" style="left:5px;top:376px" width="12" height="11" viewBox="0 0 12 11"><ellipse cx="6" cy="5.5" rx="5.6" ry="5.2" fill="#22C422" stroke="#108010" stroke-width="0.8"/><path d="M9.5 5.5H4.5M6.5 3L3.7 5.5L6.5 8" stroke="#fff" stroke-width="1.7" fill="none"/></svg>
<div class="t" style="left:22.099999999999998px;top:379px;font-family:'Liberation Serif',serif;font-weight:bold;font-size:8.9px;letter-spacing:0.9px;color:#0000C8">7F,</div>
<div class="t" style="left:43.1px;top:379px;font-family:'Liberation Serif',serif;font-weight:bold;font-size:8.9px;letter-spacing:0.9px;color:#00A000">90</div>
<div class="t" style="left:58.85px;top:379px;font-family:'Liberation Serif',serif;font-weight:bold;font-size:8.9px;letter-spacing:0.9px;color:#00A000">00</div>
<div class="t" style="left:84.3px;top:378.5px;font-family:'Liberation Mono',monospace;font-size:8.7px;font-style:italic;color:#1A1A1A;letter-spacing:0">[Normal ending of the command.]</div>


<div class="a" style="left:0;top:434px;width:713px;height:2px;background:#0831D9"></div>
<div class="a" style="left:711px;top:23px;width:2px;height:413px;background:#0831D9"></div>
<svg class="a" style="left:2px;top:6px;" width="11" height="12" viewBox="0 0 11 12"><path d="M3 1L6 4M5 0.5L8 3.5" stroke="#E8E8F8" stroke-width="0.8"/><path d="M3 11L6 8M5 11.5L8 8.5" stroke="#E8E8F8" stroke-width="0.8"/><rect x="0.5" y="5" width="10" height="3" rx="1.2" fill="#F01818"/><rect x="4.5" y="5.6" width="2" height="1.6" fill="#fff"/></svg>
<div class="a" style="left:659px;top:5px;width:16px;height:16px;border:1px solid #fff;border-radius:3px;background:linear-gradient(135deg,#6E9CF8 0%,#3A76F0 40%,#1E5CE6 100%)"></div>
<div class="a" style="left:663px;top:15px;width:5px;height:2px;background:#fff"></div>
<div class="a" style="left:676px;top:5px;width:16px;height:16px;border:1px solid #fff;border-radius:3px;background:linear-gradient(135deg,#6E9CF8 0%,#3A76F0 40%,#1E5CE6 100%)"></div>
<div class="a" style="left:680px;top:9px;width:9px;height:8px;border:1px solid #fff;border-top:2px solid #fff"></div>
<div class="a" style="left:693px;top:5px;width:16px;height:16px;border:1px solid #fff;border-radius:3px;background:linear-gradient(135deg,#F29A7C 0%,#E5623A 45%,#CC4418 100%)"></div>
<svg class="a" style="left:697px;top:9px;" width="9" height="9" viewBox="0 0 9 9"><path d="M1 1L8 8M8 1L1 8" stroke="#fff" stroke-width="1.5"/></svg>
<svg class="a" style="left:4px;top:44px;" width="11" height="11" viewBox="0 0 11 11"><path d="M0.5 3.5V10.5H10.5V3.5" fill="#fff" stroke="#3A3A3A" stroke-width="1"/><path d="M10.5 3.5V10.5" stroke="#A8A8A8" stroke-width="1"/><rect x="1" y="9.3" width="9.5" height="1.4" fill="#9C92D4"/><rect x="0.5" y="0.5" width="6" height="5.5" fill="#D6D6D6" stroke="#111" stroke-width="1"/><path d="M2 2L5 4.6M5 2L2 4.6" stroke="#000" stroke-width="1"/><rect x="6.5" y="1" width="4" height="2.5" fill="#A828B0"/></svg>
<svg class="a" style="left:30px;top:46px;" width="11" height="10" viewBox="0 0 11 10"><rect x="0.5" y="0.5" width="7" height="7" fill="#DDD" stroke="#555" stroke-width="0.8"/><rect x="2.5" y="2.5" width="8" height="7" fill="#fff" stroke="#000" stroke-width="1"/><rect x="4" y="5" width="5" height="1" fill="#000"/><rect x="3" y="2.5" width="7" height="1.5" fill="#333"/></svg>
<svg class="a" style="left:49px;top:46px;" width="10" height="10" viewBox="0 0 10 10"><rect x="0.5" y="1.5" width="6" height="7.5" fill="#EEE" stroke="#555" stroke-width="0.8"/><rect x="3.5" y="0.5" width="6" height="8.5" fill="#BBB" stroke="#222" stroke-width="0.9"/><path d="M4 3H9M4 5H9M4 7H9" stroke="#444" stroke-width="0.7"/></svg>
<svg class="a" style="left:68px;top:46px;" width="10" height="11" viewBox="0 0 10 11"><rect x="0.5" y="0.5" width="8" height="8" fill="#F4F4F4" stroke="#333" stroke-width="0.9"/><path d="M2 3H7M2 5H7" stroke="#222" stroke-width="0.9"/><rect x="4" y="2" width="5" height="5" fill="none" stroke="#111" stroke-width="0.9"/><path d="M7.5 6V9.5M6 8.3L7.5 10L9 8.3" stroke="#7A78D0" stroke-width="1.1" fill="none"/></svg>
<svg class="a" style="left:333px;top:45px;" width="12" height="12" viewBox="0 0 12 12"><path d="M0.8 10.8L4.8 5.2L6 2L7.6 4.6L11.3 1L8.2 6.6L5.4 6.6Z" fill="#F01010" stroke="#000" stroke-width="0.9" stroke-linejoin="round"/></svg>
<svg class="a" style="left:361px;top:44px;" width="13" height="12" viewBox="0 0 13 12"><circle cx="6.5" cy="3.5" r="2.6" fill="#B8B8B0"/><path d="M3 11Q3 6 6.5 6.5Q10 6 11.5 10L12 11Z" fill="#A8A8A0"/><path d="M1 1V11.5M1 7H6M1 9.5H7" stroke="#A0A098" stroke-width="0.7" stroke-dasharray="1 1"/></svg>
<div class="a" style="left:338px;top:86px;width:18px;height:18px;border:1px solid #55779F;border-radius:3px;background:linear-gradient(#FFFFFF,#F3F2ED 70%,#E2DFD4)"></div>
<svg class="a" style="left:341px;top:90px;" width="12" height="10" viewBox="0 0 12 10"><path d="M1 2.5H10.5V8.5H1Z" fill="#F4F0E6" stroke="#000" stroke-width="1"/><path d="M1.5 5L3 3.5H11L9.5 8H1.5Z" fill="#E8C8A8" stroke="#222" stroke-width="0.8"/><path d="M3 2.5L6 1H10.5V2.5" fill="#fff" stroke="#555" stroke-width="0.6"/></svg>
<div class="a" style="left:338px;top:107px;width:18px;height:18px;border:1px solid #D5D2C3;border-radius:3px;background:linear-gradient(#FAFAF6,#F1EFE6)"></div>
<svg class="a" style="left:342px;top:111px;" width="10" height="10" viewBox="0 0 10 10"><path d="M1 1H9V9H1Z" fill="#A8A8A4" stroke="#959590" stroke-width="0.8"/><rect x="3" y="1" width="4" height="3" fill="#C4C4C0"/></svg>
<div class="a" style="left:338px;top:128px;width:18px;height:18px;border:1px solid #D5D2C3;border-radius:3px;background:linear-gradient(#FAFAF6,#F1EFE6)"></div>
<svg class="a" style="left:341px;top:132px;" width="11" height="10" viewBox="0 0 11 10"><path d="M3 0.5H10.5V7L8 9.5H0.5V3Z" fill="#A0A09C" stroke="#8E8E8A" stroke-width="0.7"/><path d="M0.5 3H8V9.5M8 3L10.5 0.5" stroke="#C0C0BC" stroke-width="0.7" fill="none"/></svg>
<div class="a" style="left:338px;top:149px;width:18px;height:18px;border:1px solid #D5D2C3;border-radius:3px;background:linear-gradient(#FAFAF6,#F1EFE6)"></div>
<svg class="a" style="left:341px;top:152px;" width="12" height="11" viewBox="0 0 12 11"><ellipse cx="6" cy="3.2" rx="3.2" ry="2.6" fill="#A4A4A0"/><path d="M1 10.5V7.5H4.5V5.5H7.5V7.5H11V10.5Z" fill="#A4A4A0"/></svg>
<div class="a" style="left:338px;top:172px;width:18px;height:14px;border:1px solid #D5D2C3;border-radius:3px;background:linear-gradient(#FAFAF6,#F1EFE6)"></div>
<svg class="a" style="left:342px;top:175px;" width="10" height="7" viewBox="0 0 10 7"><path d="M1.5 5.5L5 2L8.5 5.5" stroke="#9A9A96" stroke-width="2" fill="none"/></svg>
<div class="a" style="left:338px;top:189px;width:18px;height:17px;border:1px solid #D5D2C3;border-radius:3px;background:linear-gradient(#FAFAF6,#F1EFE6)"></div>
<svg class="a" style="left:341px;top:192px;" width="12" height="11" viewBox="0 0 12 11"><path d="M6 0.8L10.8 5.5L6 10.2L1.2 5.5Z" fill="#A4A4A0"/><path d="M3 3L9 8M9 3L3 8" stroke="#8A8A86" stroke-width="0.8"/><circle cx="6" cy="5.5" r="1.4" fill="#C8C8C4"/></svg>
<div class="a" style="left:338px;top:209px;width:18px;height:13px;border:1px solid #D5D2C3;border-radius:3px;background:linear-gradient(#FAFAF6,#F1EFE6)"></div>
<svg class="a" style="left:342px;top:212px;" width="10" height="7" viewBox="0 0 10 7"><path d="M1.5 1.5L5 5L8.5 1.5" stroke="#9A9A96" stroke-width="2" fill="none"/></svg>
<div class="a" style="left:338px;top:227px;width:18px;height:18px;border:1px solid #D5D2C3;border-radius:3px;background:linear-gradient(#FAFAF6,#F1EFE6)"></div>
<svg class="a" style="left:341px;top:231px;" width="11" height="11" viewBox="0 0 11 11"><path d="M1.5 1.5L9.5 9.5M9.5 1.5L1.5 9.5" stroke="#8E8E8A" stroke-width="1.3"/></svg>
<div class="a" style="left:338px;top:249px;width:18px;height:7px;overflow:hidden"><div class="a" style="left:0;top:0;width:18px;height:14px;border:1px solid #D5D2C3;border-radius:3px;background:linear-gradient(#FAFAF6,#F1EFE6)"></div><svg class="a" style="left:3px;top:3px" width="11" height="6"><path d="M1.5 1L5.5 4.5L9.5 1" stroke="#8E8E8A" stroke-width="1.3" fill="none"/></svg></div>
<div class="a" style="left:608px;top:68px;width:18px;height:18px;border:1px solid #55779F;border-radius:3px;background:linear-gradient(#FFFFFF,#F3F2ED 70%,#E2DFD4)"></div>
<svg class="a" style="left:611px;top:70px;" width="13" height="13" viewBox="0 0 13 13"><path d="M1.5 3.5H7.5V11.5H1.5Z" fill="#E6E6E2" stroke="#333" stroke-width="0.8"/><path d="M1.5 11.2H8M3 8.5H6" stroke="#000" stroke-width="0.9"/><path d="M7.5 1V7M4.5 4H10.5" stroke="#D00010" stroke-width="2.4"/><path d="M7.5 1.3V6.7M4.8 4H10.2" stroke="#F01020" stroke-width="1.2"/></svg>
<svg class="a" style="left:668px;top:265px;" width="12" height="11" viewBox="0 0 12 11"><circle cx="9" cy="1.8" r="1.4" fill="#252A7A"/><path d="M8.2 3.2L5.5 5.5L7.2 7L5.8 9.5M5.5 5.5L3.5 7.5L1 8.5M8.2 3.2L10.8 5.2M7 4.3L4.2 4.3L3 5.8" stroke="#2A2F88" stroke-width="1.3" fill="none" stroke-linecap="round"/><path d="M9.5 5.8L11.5 5" stroke="#6A70C0" stroke-width="0.8"/></svg>
<div class="a" style="left:690px;top:288px;width:16px;height:17px;border:1px solid #55779F;border-radius:3px;background:linear-gradient(#FFFFFF,#F3F2ED 70%,#E2DFD4)"></div>
<svg class="a" style="left:693px;top:291px;" width="10" height="10" viewBox="0 0 10 10"><path d="M1.5 2H8.5M3.5 2V1H6.5V2" stroke="#222" stroke-width="0.9" fill="none"/><path d="M2.3 3H7.7L7.2 9.5H2.8Z" fill="#8C8C8C" stroke="#1A1A1A" stroke-width="0.8"/><path d="M4 4V8.5M6 4V8.5" stroke="#D8D8D8" stroke-width="0.7"/></svg>
<div class="a" style="left:690px;top:309px;width:16px;height:17px;border:1px solid #55779F;border-radius:3px;background:linear-gradient(#FFFFFF,#F3F2ED 70%,#E2DFD4)"></div>
<svg class="a" style="left:693px;top:312px;" width="11" height="11" viewBox="0 0 11 11"><path d="M1.5 1.5L9.5 9.5M9.5 1.5L1.5 9.5" stroke="#F00" stroke-width="1.4"/></svg>
<div class="a" style="left:690px;top:330px;width:16px;height:17px;border:1px solid #55779F;border-radius:3px;background:linear-gradient(#FFFFFF,#F3F2ED 70%,#E2DFD4)"></div>
<svg class="a" style="left:693px;top:333px;" width="10" height="12" viewBox="0 0 10 12"><rect x="1.5" y="0.8" width="7" height="3.6" fill="#6A6A6A" stroke="#202020" stroke-width="0.7"/><path d="M3.6 4.4V6.6H1.8L5 10.6L8.2 6.6H6.4V4.4Z" fill="#8A8EE0" stroke="#3A3E90" stroke-width="0.6"/></svg>
<div class="a" style="left:690px;top:351px;width:16px;height:18px;border:1px solid #55779F;border-radius:3px;background:linear-gradient(#FFFFFF,#F3F2ED 70%,#E2DFD4)"></div>
<svg class="a" style="left:693px;top:354px;" width="10" height="10" viewBox="0 0 10 10"><rect x="0.8" y="0.8" width="8.4" height="8.4" fill="#8A8A8A" stroke="#1A1A1A" stroke-width="0.9"/><rect x="2.3" y="1.2" width="5.4" height="3" fill="#F0F0F0"/><rect x="2.8" y="6" width="4.4" height="3" fill="#3A3A3A"/><rect x="3.6" y="6.6" width="1.2" height="2" fill="#DDD"/></svg>
<svg class="a" style="left:674px;top:45px;" width="12" height="11" viewBox="0 0 12 11"><path d="M6 0.8C9 0.8 11.2 2.5 11.2 4.5C11.2 6.5 9 8 6.5 8L3.5 10.5L4.3 7.6C2.2 7 0.8 5.9 0.8 4.5C0.8 2.5 3 0.8 6 0.8Z" fill="#C8CCEC" stroke="#4A4E80" stroke-width="0.8"/></svg>
<div class="a" style="left:693px;top:45px;width:10px;height:10px;background:linear-gradient(135deg,#8CC890,#4E9A58);border:1px solid #1E3A22"></div>
<svg class="a" style="left:695px;top:47px;" width="6" height="6" viewBox="0 0 6 6"><path d="M1 1L5 3L1 5" stroke="#D0F0D0" stroke-width="0.7" fill="none"/></svg>
<svg class="a" style="left:311px;top:48px;" width="8" height="6" viewBox="0 0 8 6"><path d="M1 1.2L4 4.4L7 1.2" stroke="#4D6185" stroke-width="1.7" fill="none"/></svg>
<svg class="a" style="left:152px;top:64px;" width="3" height="5" viewBox="0 0 3 5"><path d="M3 0L0 2.5L3 5Z" fill="#000"/></svg>
<svg class="a" style="left:152px;top:73px;" width="3" height="5" viewBox="0 0 3 5"><path d="M0 0L3 2.5L0 5Z" fill="#000"/></svg>

</body></html>
